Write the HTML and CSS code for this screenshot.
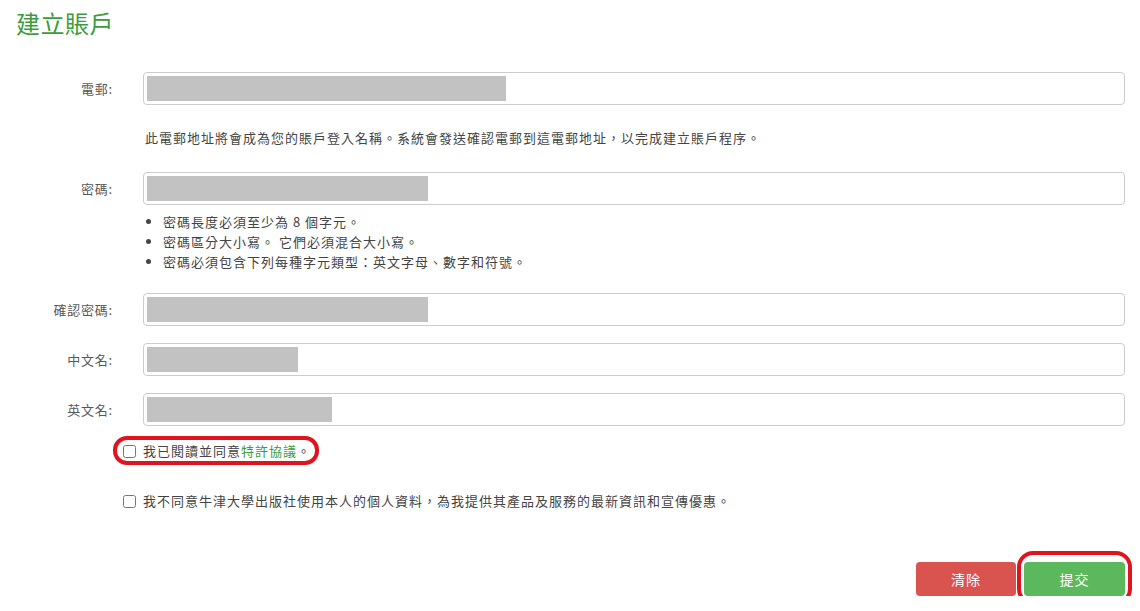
FILE: index.html
```html
<!DOCTYPE html>
<html lang="zh-Hant">
<head>
<meta charset="utf-8">
<title>建立賬戶</title>
<link rel="stylesheet" href="styles.css">
</head>
<body>
<div class="page">
  <h1 class="title">建立賬戶</h1>
  <form class="form">
    <div class="row">
      <label class="label">電郵:</label>
      <div class="field"><div class="mask w-email"></div></div>
    </div>
    <div class="row help-row">
      <span></span>
      <p class="help">此電郵地址將會成為您的賬戶登入名稱。系統會發送確認電郵到這電郵地址，以完成建立賬戶程序。</p>
    </div>
    <div class="row row-pass">
      <label class="label">密碼:</label>
      <div class="field"><div class="mask w-pass"></div></div>
    </div>
    <div class="row">
      <span></span>
      <ul class="rules">
        <li>密碼長度必須至少為 8 個字元。</li>
        <li>密碼區分大小寫。 它們必須混合大小寫。</li>
        <li>密碼必須包含下列每種字元類型：英文字母、數字和符號。</li>
      </ul>
    </div>
    <div class="row row-confirm">
      <label class="label">確認密碼:</label>
      <div class="field"><div class="mask w-pass"></div></div>
    </div>
    <div class="row row-name">
      <label class="label">中文名:</label>
      <div class="field"><div class="mask w-cname"></div></div>
    </div>
    <div class="row row-name">
      <label class="label">英文名:</label>
      <div class="field"><div class="mask w-ename"></div></div>
    </div>
    <div class="check-row check-first">
      <label class="check">
        <input type="checkbox" class="box">
        <span>我已閱讀並同意<a class="link" href="#">特許協議</a>。</span>
        <span class="ring ring-check"></span>
      </label>
    </div>
    <div class="check-row check-second">
      <label class="check">
        <input type="checkbox" class="box">
        <span>我不同意牛津大學出版社使用本人的個人資料，為我提供其產品及服務的最新資訊和宣傳優惠。</span>
      </label>
    </div>
    <div class="actions">
      <button type="button" class="btn btn-clear">清除</button>
      <div class="submit-wrap">
        <button type="button" class="btn btn-submit">提交</button>
        <span class="ring ring-submit"></span>
      </div>
    </div>
  </form>
</div>
</body>
</html>
```

FILE: styles.css
```css
html, body {
  margin: 0;
  padding: 0;
  background: #ffffff;
}

body {
  font-family: "Noto Sans CJK TC", "Noto Sans", "Liberation Sans", sans-serif;
  font-size: 13px;
  color: #444444;
}

.page {
  padding: 8px 15px 0 16px;
}

.title {
  margin: 0;
  font-size: 24px;
  line-height: 29px;
  font-weight: normal;
  color: #3c9c3c;
  letter-spacing: 0.5px;
}

.form {
  margin-top: 35px;
}

.row {
  display: grid;
  grid-template-columns: 127px 1fr;
  align-items: center;
}

.label {
  text-align: right;
  padding-right: 30px;
  font-size: 13px;
  color: #595959;
  letter-spacing: 0.8px;
}

.field {
  box-sizing: border-box;
  height: 33px;
  border: 1px solid #cccccc;
  border-radius: 4px;
  padding: 3px;
  background: #ffffff;
}

.mask {
  height: 25px;
  background: #c2c2c2;
}

.w-email { width: 359px; }
.w-pass { width: 281px; }
.w-cname { width: 151px; }
.w-ename { width: 185px; }

.help-row {
  margin-top: 23px;
}

.help {
  margin: 0;
  padding-left: 2px;
  line-height: 20px;
  letter-spacing: 1px;
}

.row-pass {
  margin-top: 24px;
}

.rules {
  margin: 7px 0 0 0;
  padding-left: 20px;
  line-height: 20px;
  letter-spacing: 1px;
}

.row-confirm {
  margin-top: 21px;
}

.row-name {
  margin-top: 17px;
}

.check-row {
  padding-left: 107px;
  line-height: 20px;
  height: 20px;
}

.check-first {
  margin-top: 15px;
}

.check-second {
  margin-top: 30px;
}

.check {
  position: relative;
  display: inline-flex;
  align-items: center;
  height: 20px;
  gap: 7px;
  letter-spacing: 1px;
}

.box {
  margin: 0;
  width: 13px;
  height: 13px;
}

.link {
  color: #3c9c3c;
  text-decoration: none;
}

.ring {
  position: absolute;
  box-sizing: border-box;
  border: 4px solid #e0141e;
  pointer-events: none;
}

.ring-check {
  left: -10px;
  right: -8px;
  top: -5px;
  bottom: -4px;
  border-radius: 14px;
}

.actions {
  margin-top: 51px;
  display: flex;
  justify-content: flex-end;
  gap: 8px;
}

.submit-wrap {
  position: relative;
}

.btn {
  display: block;
  width: 100px;
  height: 34px;
  border: 0;
  border-radius: 4px;
  color: #ffffff;
  font-family: "Noto Sans CJK TC", "Noto Sans", sans-serif;
  font-size: 14px;
  letter-spacing: 1px;
  cursor: pointer;
}

.btn-clear {
  background: #d9534f;
}

.btn-submit {
  width: 101px;
  background: #5cb85c;
}

.ring-submit {
  left: -7px;
  right: -7px;
  top: -11px;
  bottom: -9px;
  border-radius: 16px;
}
```
